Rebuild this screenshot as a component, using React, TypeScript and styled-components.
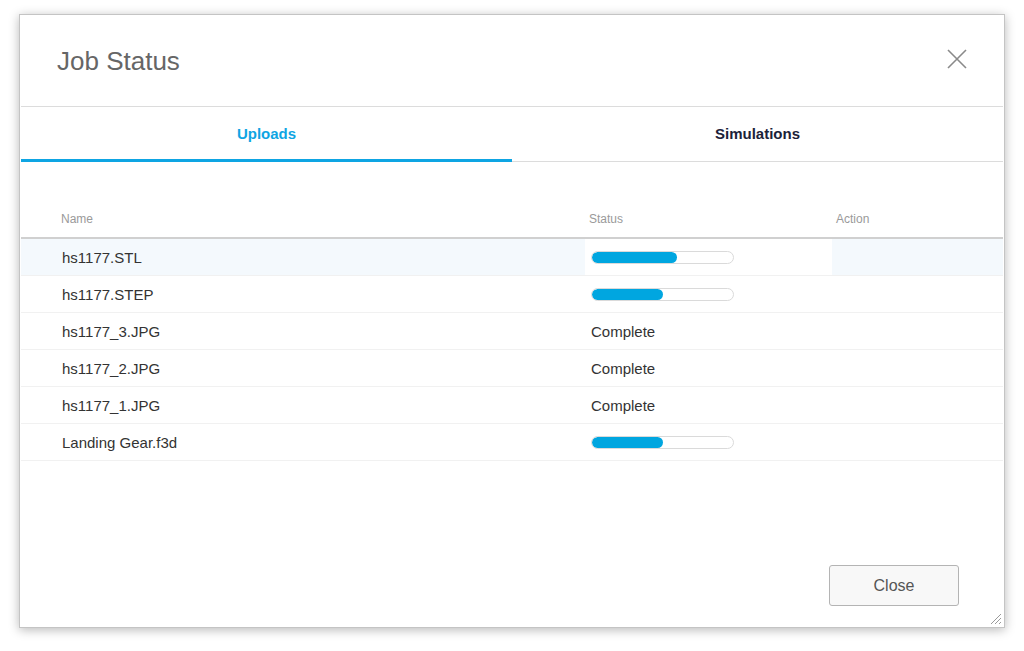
import styled, { createGlobalStyle } from "styled-components";

const GlobalStyle = createGlobalStyle`
  html, body {
    margin: 0;
    padding: 0;
    background: #ffffff;
    font-family: "Liberation Sans", Arial, sans-serif;
  }
`;

type Upload = {
  name: string;
  progress?: number;
};

const uploads: Upload[] = [
  { name: "hs1177.STL", progress: 60 },
  { name: "hs1177.STEP", progress: 50 },
  { name: "hs1177_3.JPG" },
  { name: "hs1177_2.JPG" },
  { name: "hs1177_1.JPG" },
  { name: "Landing Gear.f3d", progress: 50 },
];

const Page = styled.div`
  padding: 14px 0 23px 19px;
`;

const Dialog = styled.div`
  position: relative;
  width: 982px;
  height: 612px;
  border: 1px solid #c4c4c4;
  background: #ffffff;
  box-shadow: 0 2px 10px rgba(0, 0, 0, 0.28);
  display: flex;
  flex-direction: column;
  padding: 0 1px;
  box-sizing: content-box;
`;

const Header = styled.div`
  height: 91px;
  display: flex;
  align-items: center;
  justify-content: space-between;
  padding: 0 31px 0 36px;
  border-bottom: 1px solid #dcdcdc;
`;

const Title = styled.h1`
  margin: 0;
  font-size: 26px;
  font-weight: 400;
  color: #666666;
  padding-top: 2px;
`;

const CloseIcon = styled.button`
  width: 30px;
  height: 30px;
  border: none;
  background: none;
  padding: 0;
  display: flex;
  align-items: center;
  justify-content: center;
  margin-bottom: 4px;
  cursor: pointer;
`;

const Tabs = styled.div`
  display: grid;
  grid-template-columns: 1fr 1fr;
  border-bottom: 1px solid #dcdcdc;
`;

const Tab = styled.div<{ $active?: boolean }>`
  height: 52px;
  display: flex;
  align-items: center;
  justify-content: center;
  font-size: 15px;
  font-weight: 700;
  color: ${(p) => (p.$active ? "#0ea5e3" : "#1b2239")};
  border-bottom: 3px solid ${(p) => (p.$active ? "#0ea5e3" : "transparent")};
  margin-bottom: -1px;
  cursor: pointer;
`;

const Body = styled.div`
  flex: 1;
  padding-top: 38px;
`;

const Row = styled.div<{ $head?: boolean; $hover?: boolean }>`
  display: grid;
  grid-template-columns: 564px 247px 1fr;
  height: ${(p) => (p.$head ? "37px" : "36px")};
  align-items: stretch;
  border-bottom: ${(p) => (p.$head ? "2px solid #d0d0d0" : "1px solid #f1f1f1")};
  background: ${(p) => (p.$hover ? "#f4f9fd" : "transparent")};
  box-sizing: content-box;
`;

const Cell = styled.div<{ $head?: boolean; $pad: number; $white?: boolean }>`
  display: flex;
  align-items: center;
  padding-left: ${(p) => p.$pad}px;
  font-size: ${(p) => (p.$head ? "12px" : "15px")};
  color: ${(p) => (p.$head ? "#9a9a9a" : "#333333")};
  background: ${(p) => (p.$white ? "#ffffff" : "transparent")};
  padding-top: ${(p) => (p.$head ? "1px" : "0")};
`;

const Progress = styled.div`
  width: 141px;
  height: 11px;
  border: 1px solid #dadada;
  border-radius: 7px;
  background: #ffffff;
  overflow: hidden;
`;

const ProgressFill = styled.div`
  height: 100%;
  background: #00a6e0;
  border-radius: 7px;
`;

const Footer = styled.div`
  display: flex;
  justify-content: flex-end;
  padding: 0 44px 21px 0;
`;

const Button = styled.button`
  width: 130px;
  height: 41px;
  border: 1px solid #b4b4b4;
  border-radius: 3px;
  background: #f8f8f8;
  font-family: "Liberation Sans", Arial, sans-serif;
  font-size: 16px;
  color: #555555;
  cursor: pointer;
`;

const Grip = styled.svg`
  position: absolute;
  right: 2px;
  bottom: 2px;
`;

export default function App() {
  return (
    <Page>
      <GlobalStyle />
      <Dialog>
        <Header>
          <Title>Job Status</Title>
          <CloseIcon aria-label="Close">
            <svg width="20" height="20" viewBox="0 0 20 20">
              <path
                d="M1 1 L19 19 M19 1 L1 19"
                stroke="#8a8a8a"
                strokeWidth="1.6"
                fill="none"
              />
            </svg>
          </CloseIcon>
        </Header>
        <Tabs>
          <Tab $active>Uploads</Tab>
          <Tab>Simulations</Tab>
        </Tabs>
        <Body>
          <Row $head>
            <Cell $head $pad={40}>Name</Cell>
            <Cell $head $pad={4}>Status</Cell>
            <Cell $head $pad={4}>Action</Cell>
          </Row>
          {uploads.map((u, i) => (
            <Row key={u.name} $hover={i === 0}>
              <Cell $pad={41}>{u.name}</Cell>
              <Cell $pad={6} $white={i === 0}>
                {u.progress !== undefined ? (
                  <Progress>
                    <ProgressFill style={{ width: `${u.progress}%` }} />
                  </Progress>
                ) : (
                  "Complete"
                )}
              </Cell>
              <Cell $pad={4} />
            </Row>
          ))}
        </Body>
        <Footer>
          <Button>Close</Button>
        </Footer>
        <Grip width="13" height="13" viewBox="0 0 13 13">
          <path
            d="M12 2 L2 12 M12 6 L6 12 M12 10 L10 12"
            stroke="#9a9a9a"
            strokeWidth="1"
            fill="none"
          />
        </Grip>
      </Dialog>
    </Page>
  );
}
